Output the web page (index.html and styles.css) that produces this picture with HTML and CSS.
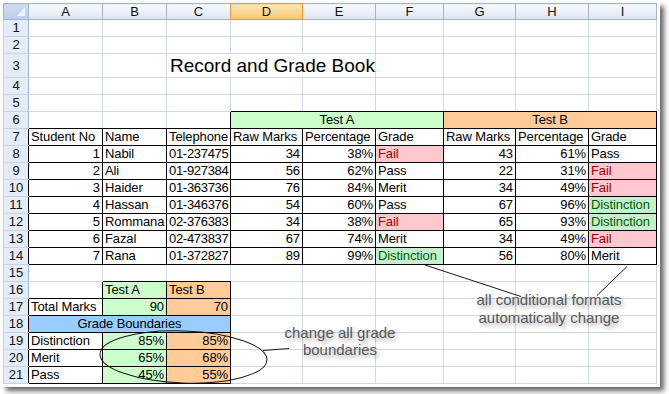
FILE: index.html
```html
<!DOCTYPE html>
<html lang="en">
<head>
  <meta charset="UTF-8" />
  <meta name="viewport" content="width=device-width, initial-scale=1.0" />
  <title>Record and Grade Book</title>
  <link rel="stylesheet" href="styles.css">
</head>
<body>
  <div class="page">
    <div class="sheet">
      <table class="grid">
        <colgroup>
          <col class="w-rh"><col class="w-a"><col class="w-b"><col class="w-c"><col class="w-d">
          <col class="w-e"><col class="w-f"><col class="w-g"><col class="w-h"><col class="w-i">
        </colgroup>
        <tr class="hdr">
          <th class="corner"></th><th>A</th><th>B</th><th class="pre-sel">C</th><th class="sel">D</th>
          <th>E</th><th>F</th><th>G</th><th>H</th><th>I</th>
        </tr>
        <tr><td class="rh">1</td><td></td><td></td><td></td><td></td><td></td><td></td><td></td><td></td><td></td></tr>
        <tr><td class="rh">2</td><td></td><td></td><td></td><td></td><td></td><td></td><td></td><td></td><td></td></tr>
        <tr class="tall">
          <td class="rh">3</td><td></td><td></td>
          <td class="title" colspan="3">Record and Grade Book</td>
          <td></td><td></td><td></td><td></td>
        </tr>
        <tr><td class="rh">4</td><td></td><td></td><td></td><td></td><td></td><td></td><td></td><td></td><td></td></tr>
        <tr>
          <td class="rh">5</td><td></td><td></td><td></td>
          <td class="kb"></td><td class="kb"></td><td class="kb"></td><td class="kb"></td><td class="kb"></td><td class="kb"></td>
        </tr>
        <tr>
          <td class="rh">6</td><td class="kb"></td><td class="kb"></td><td class="kb kr"></td>
          <td class="k green mid" colspan="3">Test A</td>
          <td class="k orange mid" colspan="3">Test B</td>
        </tr>
        <tr>
          <td class="rh kr">7</td><td class="k">Student No</td><td class="k">Name</td><td class="k">Telephone</td>
          <td class="k">Raw Marks</td><td class="k">Percentage</td><td class="k">Grade</td>
          <td class="k">Raw Marks</td><td class="k">Percentage</td><td class="k">Grade</td>
        </tr>
        <tr>
          <td class="rh kr">8</td><td class="k n">1</td><td class="k">Nabil</td><td class="k tel">01-237475</td>
          <td class="k n">34</td><td class="k n">38%</td><td class="k fail">Fail</td>
          <td class="k n">43</td><td class="k n">61%</td><td class="k">Pass</td>
        </tr>
        <tr>
          <td class="rh kr">9</td><td class="k n">2</td><td class="k">Ali</td><td class="k tel">01-927384</td>
          <td class="k n">56</td><td class="k n">62%</td><td class="k">Pass</td>
          <td class="k n">22</td><td class="k n">31%</td><td class="k fail">Fail</td>
        </tr>
        <tr>
          <td class="rh kr">10</td><td class="k n">3</td><td class="k">Haider</td><td class="k tel">01-363736</td>
          <td class="k n">76</td><td class="k n">84%</td><td class="k">Merit</td>
          <td class="k n">34</td><td class="k n">49%</td><td class="k fail">Fail</td>
        </tr>
        <tr>
          <td class="rh kr">11</td><td class="k n">4</td><td class="k">Hassan</td><td class="k tel">01-346376</td>
          <td class="k n">54</td><td class="k n">60%</td><td class="k">Pass</td>
          <td class="k n">67</td><td class="k n">96%</td><td class="k dist">Distinction</td>
        </tr>
        <tr>
          <td class="rh kr">12</td><td class="k n">5</td><td class="k">Rommana</td><td class="k tel">02-376383</td>
          <td class="k n">34</td><td class="k n">38%</td><td class="k fail">Fail</td>
          <td class="k n">65</td><td class="k n">93%</td><td class="k dist">Distinction</td>
        </tr>
        <tr>
          <td class="rh kr">13</td><td class="k n">6</td><td class="k">Fazal</td><td class="k tel">02-473837</td>
          <td class="k n">67</td><td class="k n">74%</td><td class="k">Merit</td>
          <td class="k n">34</td><td class="k n">49%</td><td class="k fail">Fail</td>
        </tr>
        <tr>
          <td class="rh kr">14</td><td class="k n">7</td><td class="k">Rana</td><td class="k tel">01-372827</td>
          <td class="k n">89</td><td class="k n">99%</td><td class="k dist">Distinction</td>
          <td class="k n">56</td><td class="k n">80%</td><td class="k">Merit</td>
        </tr>
        <tr>
          <td class="rh">15</td><td></td><td class="kb"></td><td class="kb"></td>
          <td></td><td></td><td></td><td></td><td></td><td></td>
        </tr>
        <tr>
          <td class="rh">16</td><td class="kb kr"></td><td class="k green">Test A</td><td class="k orange">Test B</td>
          <td></td><td></td><td></td><td></td><td></td><td></td>
        </tr>
        <tr>
          <td class="rh kr">17</td><td class="k">Total Marks</td><td class="k green n">90</td><td class="k orange n">70</td>
          <td></td><td></td><td></td><td></td><td></td><td></td>
        </tr>
        <tr>
          <td class="rh kr">18</td><td class="k blue mid" colspan="3">Grade Boundaries</td>
          <td></td><td></td><td></td><td></td><td></td><td></td>
        </tr>
        <tr>
          <td class="rh kr">19</td><td class="k">Distinction</td><td class="k green n">85%</td><td class="k orange n">85%</td>
          <td></td><td></td><td></td><td></td><td></td><td></td>
        </tr>
        <tr>
          <td class="rh kr">20</td><td class="k">Merit</td><td class="k green n">65%</td><td class="k orange n">68%</td>
          <td></td><td></td><td></td><td></td><td></td><td></td>
        </tr>
        <tr>
          <td class="rh kr">21</td><td class="k">Pass</td><td class="k green n">45%</td><td class="k orange n">55%</td>
          <td></td><td></td><td></td><td></td><td></td><td></td>
        </tr>
      </table>
    </div>

    <!-- callouts drawn over the sheet -->
    <svg class="marks" width="669" height="394" viewBox="0 0 669 394">
      <ellipse cx="183.5" cy="357" rx="83.5" ry="26" transform="rotate(2 183.5 357)" />
      <line x1="263" y1="350.5" x2="289" y2="348.5" />
      <line x1="425" y1="265" x2="521" y2="296.5" />
      <line x1="627" y1="266.5" x2="597" y2="295.5" />
    </svg>
    <div class="note note-bounds">change all grade<br>boundaries</div>
    <div class="note note-formats">all conditional formats<br>automatically change</div>
  </div>
</body>
</html>
```

FILE: styles.css
```css
body {
  margin: 0;
  background: #fff;
  font-family: "Liberation Sans", Arial, sans-serif;
  font-size: 13px;
  color: #000;
}
.page {
  position: relative;
  width: 669px;
  height: 394px;
  overflow: hidden;
}
.sheet {
  display: inline-block;
  margin: 2px 0 0 2px;
  padding: 1px 3px 3px 1px;
  background: #fff;
  box-shadow: 4px 4px 5px rgba(0,0,0,0.6);
}
.grid {
  border-collapse: collapse;
  table-layout: fixed;
  width: 654px;
}
.w-rh { width: 25px; }
.w-a { width: 74px; }
.w-b { width: 64px; }
.w-c { width: 64px; }
.w-d { width: 72px; }
.w-e { width: 73px; }
.w-f { width: 68px; }
.w-g { width: 72px; }
.w-h { width: 73px; }
.w-i { width: 68px; }

.grid td,
.grid th {
  padding: 0 2px;
  border: 1px solid #d0d7e5;
  line-height: 16px;
  letter-spacing: -0.1px;
  white-space: nowrap;
  overflow: visible;
  vertical-align: bottom;
  font-weight: normal;
  text-align: left;
}
.grid th {
  line-height: 15px;
  letter-spacing: 0;
  text-align: center;
  color: #111;
  background: linear-gradient(#f8fafd, #e9eef6 60%, #dde5f1);
  border-color: #9eb6ce;
}
.grid th.corner {
  background:
    linear-gradient(135deg, transparent 55%, #edf2fa 55%) no-repeat right 3px bottom 3px / 9px 9px,
    linear-gradient(#cfdcf0, #bccfea);
}
.grid th.sel {
  background: linear-gradient(#fce6b8, #f9d58e 60%, #f6c76c);
  border-color: #f29536;
}
.grid th.pre-sel {
  border-right-color: #f29536;
}
.grid td.rh {
  padding: 0;
  letter-spacing: 0;
  text-align: center;
  color: #111;
  background: #e4ecf7;
  border-color: #c5d3e6;
  border-right-color: #9eb6ce;
}
.grid tr.tall td {
  line-height: 23px;
}
.grid td.title {
  padding-left: 3px;
  font-size: 19px;
  letter-spacing: 0;
}
.grid td.tel {
  letter-spacing: -0.3px;
}

/* black boxes round the data */
.grid td.k { border: 1px solid #000; }
.grid td.kb { border-bottom-color: #000; }
.grid td.kr { border-right-color: #000; }

.n { text-align: right !important; }
.mid { text-align: center !important; }
.green { background: #ccffcc; }
.orange { background: #ffcc99; }
.blue { background: #99ccff; }
.fail {
  background: #ffc7ce;
  color: #9c0006;
}
.dist {
  background: #c6efce;
  color: #006100;
}

.marks {
  position: absolute;
  left: 0;
  top: 0;
  pointer-events: none;
}
.marks ellipse,
.marks line {
  fill: none;
  stroke: #1a1a1a;
  stroke-width: 1;
}
.note {
  position: absolute;
  font-size: 15px;
  color: #595959;
  text-align: center;
  text-shadow: 2px 3px 4px rgba(0,0,0,0.35);
  white-space: nowrap;
}
.note-bounds {
  left: 270px;
  top: 324px;
  width: 140px;
  line-height: 17px;
}
.note-formats {
  left: 469px;
  top: 291px;
  width: 160px;
  line-height: 18px;
}
```
